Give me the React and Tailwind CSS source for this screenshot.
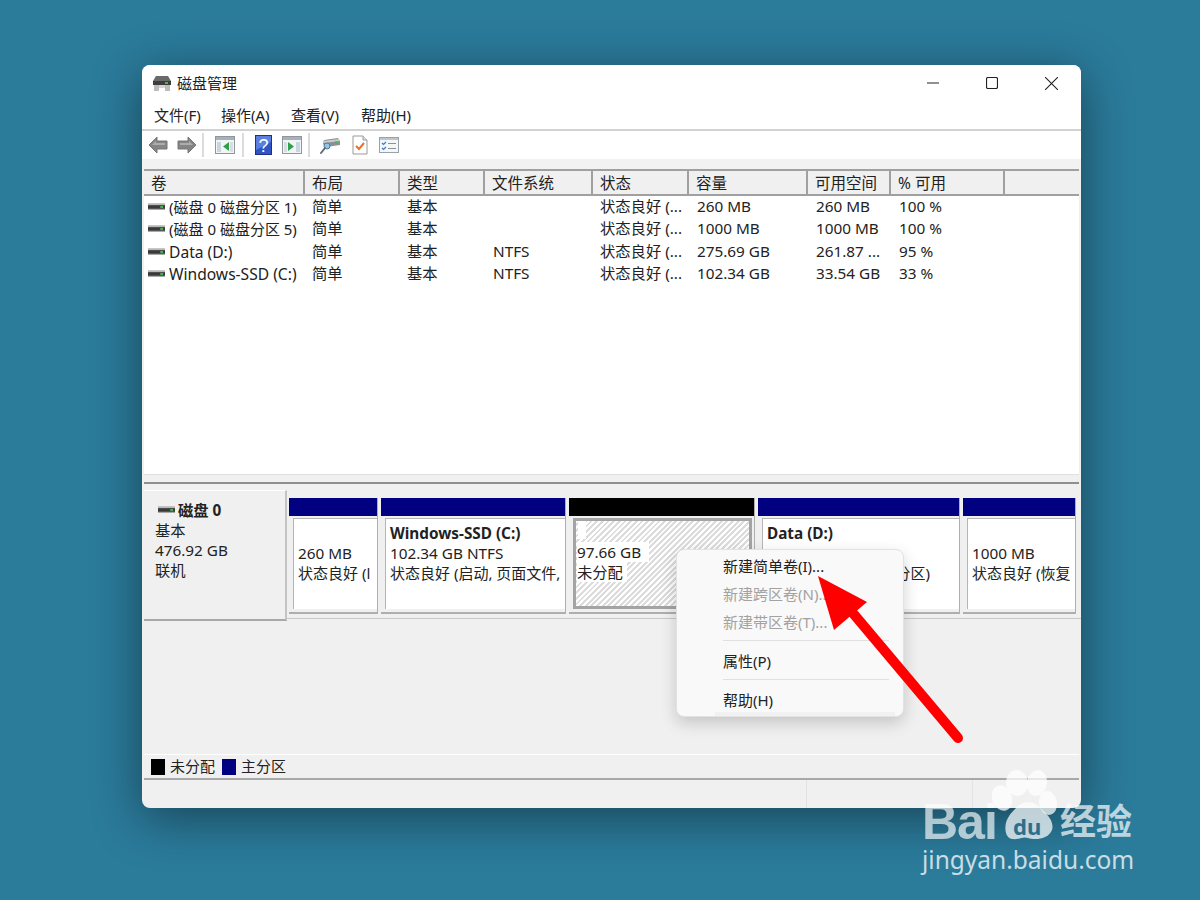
import React from "react";

const volumes = [
  { name: "(磁盘 0 磁盘分区 1)", nameSize: "text-[15px]", layout: "简单", type: "基本", fs: "", status: "状态良好 (...", size: "260 MB", free: "260 MB", pct: "100 %" },
  { name: "(磁盘 0 磁盘分区 5)", nameSize: "text-[15px]", layout: "简单", type: "基本", fs: "", status: "状态良好 (...", size: "1000 MB", free: "1000 MB", pct: "100 %" },
  { name: "Data (D:)", nameSize: "text-[15.6px]", layout: "简单", type: "基本", fs: "NTFS", status: "状态良好 (...", size: "275.69 GB", free: "261.87 ...", pct: "95 %" },
  { name: "Windows-SSD (C:)", nameSize: "text-[15.6px]", layout: "简单", type: "基本", fs: "NTFS", status: "状态良好 (...", size: "102.34 GB", free: "33.54 GB", pct: "33 %" },
];

const DriveIcon = ({ className }) => (
  <svg viewBox="0 0 18 8" className={className}>
    <rect x="0" y="0" width="18" height="2" fill="#b8b8b8" />
    <rect x="0" y="2" width="18" height="4" fill="#3a3a3a" />
    <rect x="13" y="3" width="3" height="2" fill="#3fc04a" />
    <rect x="0" y="6" width="18" height="1" fill="#9a9a9a" />
  </svg>
);

const Sep = () => <div className="w-[2px] h-[24px] bg-[#dcdcdc]" />;

const PaneIcon = ({ dir }) => (
  <svg viewBox="0 0 20 18" className="w-[20px] h-[18px]">
    <rect x="0.5" y="0.5" width="19" height="17" fill="#f2f4f6" stroke="#8f979e" />
    <rect x="1" y="1" width="18" height="3" fill="#a9b0b6" />
    {dir === "left" ? (
      <>
        <rect x="2" y="6" width="4" height="10" fill="#c6d6e2" />
        <path d="M14 6v9l-6-4.5z" fill="#2ca24a" />
        <rect x="15" y="6" width="3" height="10" fill="#d7dde2" />
      </>
    ) : (
      <>
        <rect x="14" y="6" width="4" height="10" fill="#c6d6e2" />
        <path d="M6 6v9l6-4.5z" fill="#2ca24a" />
        <rect x="2" y="6" width="3" height="10" fill="#d7dde2" />
      </>
    )}
  </svg>
);

const NavArrow = ({ flip }) => (
  <svg viewBox="0 0 20 18" className={flip ? "w-[20px] h-[18px] -scale-x-100" : "w-[20px] h-[18px]"}>
    <path d="M1 9 L9 1 V5 H19 V13 H9 V17 Z" fill="#858585" stroke="#777" strokeWidth="1" strokeLinejoin="round" />
    <path d="M4 9 L8 5 V7 H17 V9 Z" fill="#adadad" />
  </svg>
);

const Toolbar = () => (
  <div className="h-[28px] bg-white flex items-center pl-[6px] shrink-0">
    <NavArrow />
    <div className="w-[9px]" />
    <NavArrow flip />
    <div className="w-[5px]" />
    <Sep />
    <div className="w-[11px]" />
    <PaneIcon dir="left" />
    <div className="w-[7px]" />
    <Sep />
    <div className="w-[11px]" />
    <svg viewBox="0 0 17 20" className="w-[17px] h-[20px]">
      <rect x="0.5" y="0.5" width="16" height="19" fill="#2f55c4" stroke="#1d2f86" />
      <path d="M1 1h15v6L1 15z" fill="#5b7fe0" />
      <text x="8.5" y="16.5" textAnchor="middle" fontSize="18" fill="#fff" fontFamily="Liberation Sans">?</text>
    </svg>
    <div className="w-[10px]" />
    <PaneIcon dir="right" />
    <div className="w-[6px]" />
    <Sep />
    <div className="w-[10px]" />
    <svg viewBox="0 0 21 20" className="w-[21px] h-[20px]">
      <path d="M4 5 L18 3 L20 6 V10 L6 12 L3 9z" fill="#8a9096" />
      <path d="M3 6 L19 4 L20 6 L4 8z" fill="#c7ccd0" />
      <rect x="15" y="6.5" width="3" height="2" fill="#37c04a" />
      <circle cx="7" cy="11" r="3" fill="#8fc6ee" stroke="#5a7a94" />
      <path d="M5 13 L1 18" stroke="#5f6a74" strokeWidth="2" strokeLinecap="round" />
    </svg>
    <div className="w-[11px]" />
    <svg viewBox="0 0 16 20" className="w-[16px] h-[20px]">
      <path d="M1 1h10l4 4v14H1z" fill="#fff" stroke="#9a9a9a" />
      <path d="M11 1v4h4" fill="#e4e4e4" stroke="#9a9a9a" />
      <path d="M4 11l3 3 5-6" fill="none" stroke="#e8702a" strokeWidth="2" />
    </svg>
    <div className="w-[11px]" />
    <svg viewBox="0 0 20 16" className="w-[20px] h-[16px]">
      <rect x="0.5" y="0.5" width="19" height="15" fill="#f4f6f8" stroke="#9aa2a8" />
      <rect x="1" y="1" width="18" height="2" fill="#c0c6cb" />
      <path d="M3 6l1.5 1.5L7 5M3 11l1.5 1.5L7 10" fill="none" stroke="#2f7fd6" strokeWidth="1.2" />
      <path d="M9 6.5h8M9 11.5h8" stroke="#8a9298" strokeWidth="1.2" />
    </svg>
  </div>
);

const headW = ["w-[161px]", "w-[95px]", "w-[85px]", "w-[108px]", "w-[96px]", "w-[119px]", "w-[83px]", "w-[114px]"];
const headers = ["卷", "布局", "类型", "文件系统", "状态", "容量", "可用空间", "% 可用"];

const VolumeTable = () => (
  <div className="h-[305px] mx-[2px] bg-white shrink-0 flex flex-col overflow-hidden">
    <div className="h-[27px] flex bg-[#f0f0f0] border-t-2 border-b-2 border-[#a0a0a0] shrink-0">
      {headers.map((h, i) => (
        <div key={h} className={`${headW[i]} shrink-0 pl-[7px] border-r-2 border-[#a0a0a0] text-[15.5px] leading-[25px] text-[#222]`}>
          {h}
        </div>
      ))}
      <div className="flex-1" />
    </div>
    <div>
      {volumes.map((v) => (
        <div key={v.name} className="h-[22.3px] flex text-[15.3px] leading-[20px] text-[#222]">
          <div className={`w-[160px] shrink-0 pl-[4px] flex items-center gap-[4px] whitespace-nowrap overflow-hidden ${v.nameSize}`}>
            <DriveIcon className="w-[17px] h-[8px] shrink-0" />
            <span>{v.name}</span>
          </div>
          <div className="w-[95px] shrink-0 pl-[8px]">{v.layout}</div>
          <div className="w-[85px] shrink-0 pl-[8px]">{v.type}</div>
          <div className="w-[108px] shrink-0 pl-[9px]">{v.fs}</div>
          <div className="w-[96px] shrink-0 pl-[8px] whitespace-nowrap">{v.status}</div>
          <div className="w-[119px] shrink-0 pl-[9px]">{v.size}</div>
          <div className="w-[83px] shrink-0 pl-[9px] whitespace-nowrap">{v.free}</div>
          <div className="w-[114px] shrink-0 pl-[9px]">{v.pct}</div>
        </div>
      ))}
    </div>
  </div>
);

const Partition = ({ w, bar = "bg-[#000080]", hatch, lines }) => (
  <div className={`${w} shrink-0 flex flex-col border-r border-b-2 border-[#aeaeae]`}>
    <div className={`h-[18px] ${bar}`} />
    {hatch ? (
      <div className="h-[96px] pt-[2px] pl-[4px] pb-[3px] pr-[2px] bg-[#f0f0f0]">
        <div className="h-full border-[3px] border-[#a4a4a4] bg-[repeating-linear-gradient(135deg,#ffffff_0,#ffffff_2px,#dcdcdc_2px,#dcdcdc_4px)] pl-[1px] text-[15.3px] leading-[20px] text-[#222]">
          <div className="w-[8px] h-[18px] bg-white ml-[1px]" />
          <div className="h-[3px]" />
          <div className="bg-white w-fit pr-[8px]">97.66 GB</div>
          <div className="bg-white w-fit pr-[4px]">未分配</div>
        </div>
      </div>
    ) : (
      <div className="h-[96px] pt-[2px] pl-[4px] pb-[3px] bg-[#f0f0f0]">
        <div className="h-full bg-white border-t border-l border-[#b5b5b5] pl-[4px] pr-[2px] pt-[4px] text-[15.3px] leading-[20px] text-[#222]">
          <div className="whitespace-nowrap">
            {lines.map((l, i) =>
              l.bold ? (
                <div key={i} className="font-bold">{l.text}</div>
              ) : (
                <div key={i} className={l.empty ? "h-[20px]" : l.status ? "text-[15px]" : ""}>{l.text}</div>
              )
            )}
          </div>
        </div>
      </div>
    )}
  </div>
);

const DiskPanel = () => (
  <div className="h-[137px] flex shrink-0 ml-[2px]">
    <div className="w-[143px] h-[131px] mt-[6px] bg-[#f0f0f0] border-t border-white border-r-2 border-b-2 border-r-[#c4c4c4] border-b-[#a8a8a8] pl-[11px] pt-[9px] text-[15.3px] leading-[20px] text-[#222] shrink-0">
      <div className="flex items-center font-bold pl-[3px]">
        <DriveIcon className="w-[17px] h-[8px] mr-[3px]" />
        磁盘 0
      </div>
      <div>基本</div>
      <div>476.92 GB</div>
      <div>联机</div>
    </div>
    <div className="h-[135px] flex flex-1 gap-[3px] pl-[2px] pt-[14px] items-start border-b border-[#c8c8c8]">
      <Partition w="w-[89px]" lines={[{ empty: true }, { text: "260 MB" }, { text: "状态良好 (l", status: true }]} />
      <Partition w="w-[185px]" lines={[{ text: "Windows-SSD  (C:)", bold: true }, { text: "102.34 GB NTFS" }, { text: "状态良好 (启动, 页面文件,", status: true }]} />
      <Partition w="w-[186px]" bar="bg-black" hatch />
      <Partition w="w-[202px]" lines={[{ text: "Data  (D:)", bold: true }, { text: "275.69 GB NTFS" }, { text: "状态良好 (基本数据分区)", status: true }]} />
      <Partition w="w-[113px]" lines={[{ empty: true }, { text: "1000 MB" }, { text: "状态良好 (恢复", status: true }]} />
    </div>
  </div>
);

const ContextMenu = () => (
  <div className="absolute left-[534px] top-[484px] w-[228px] h-[168px] bg-[#f9f9f9] rounded-[8px] border border-[#e2e2e2] shadow-[0_6px_16px_rgba(0,0,0,0.18)] text-[15px] text-[#222] flex flex-col pt-[3px] pl-[46px] pr-[14px]">
    <div className="h-[28px] leading-[26px]">新建简单卷(I)...</div>
    <div className="h-[28px] leading-[26px] text-[#a2a2a2]">新建跨区卷(N)...</div>
    <div className="h-[28px] leading-[27px] text-[#a2a2a2]">新建带区卷(T)...</div>
    <div className="h-[1px] bg-[#e0e0e0] mt-[3px]" />
    <div className="h-[38px] leading-[40px]">属性(P)</div>
    <div className="h-[1px] bg-[#e0e0e0]" />
    <div className="h-[32px] leading-[40px]">帮助(H)</div>
    <div className="h-[4px] -ml-[8px] -mr-[6px] bg-[#f1f1f1]" />
  </div>
);

const Watermark = () => (
  <div className="absolute left-[920px] top-[770px] w-[230px] h-[110px] text-white">
    <svg viewBox="0 0 230 110" className="absolute left-0 top-0 w-[230px] h-[110px]">
      <g fill="#fff" fillOpacity="0.72">
        <ellipse cx="97" cy="13" rx="11" ry="13" transform="rotate(-5 97 13)" />
        <ellipse cx="117" cy="13" rx="10" ry="13" transform="rotate(10 117 13)" />
        <ellipse cx="82" cy="28" rx="10" ry="13" transform="rotate(-20 82 28)" />
        <ellipse cx="128" cy="33" rx="9" ry="12" transform="rotate(-10 128 33)" />
        <path d="M96 38 C102 30 116 30 122 40 C130 46 134 54 132 60 C128 70 114 70 108 68 C102 66 100 70 92 69 C84 68 84 54 88 48 C90 44 92 42 96 38 Z" />
      </g>
    </svg>
    <div className="absolute left-[2px] top-[27px] text-[50px] leading-[50px] font-bold font-['Liberation_Sans',sans-serif] tracking-[-1px] text-white/65">
      Bai
    </div>
    <div className="absolute left-[93px] top-[43px] text-[22px] leading-[26px] font-bold text-[#2b6f8d]">du</div>
    <div className="absolute left-[140px] top-[28px] text-[36px] leading-[48px] font-bold text-white/70">经验</div>
    <div className="absolute left-[2px] top-[74px] text-[24.5px] leading-[32px] text-white/75 whitespace-nowrap">jingyan.baidu.com</div>
  </div>
);

export default function App() {
  return (
    <div className="relative w-[1200px] h-[900px] overflow-hidden bg-[#2b7b9b] font-['Noto_Sans','Noto_Sans_CJK_SC',sans-serif]">
      {/* window */}
      <div className="absolute left-[142px] top-[65px] w-[939px] h-[743px] bg-[#f0f0f0] rounded-[8px] overflow-hidden shadow-[0_10px_50px_rgba(0,0,0,0.45)] flex flex-col">
        <div className="h-[36px] bg-white flex items-center pl-[10px] shrink-0">
          <svg viewBox="0 0 20 18" className="w-[20px] h-[18px]">
            <path d="M4 2h12l3 5H1z" fill="#6a6a6a" />
            <rect x="1" y="7" width="18" height="4" fill="#3d3d3d" />
            <rect x="13" y="8" width="3" height="2" fill="#39c24c" />
            <rect x="2" y="11" width="5" height="6" fill="#bdbdbd" />
            <rect x="13" y="11" width="5" height="6" fill="#bdbdbd" />
            <rect x="7" y="11" width="6" height="3" fill="#d4d4d4" />
          </svg>
          <span className="ml-[5px] text-[15px] text-[#222]">磁盘管理</span>
          <div className="flex-1" />
          <svg viewBox="0 0 12 12" className="w-[12px] h-[12px] mr-[47px]"><path d="M0 6h12" stroke="#222" strokeWidth="1" /></svg>
          <svg viewBox="0 0 12 12" className="w-[12px] h-[12px] mr-[47px]"><rect x="0.5" y="0.5" width="11" height="11" rx="1.5" fill="none" stroke="#222" strokeWidth="1.2" /></svg>
          <svg viewBox="0 0 12 12" className="w-[13px] h-[13px] mr-[23px]"><path d="M0 0l12 12M12 0L0 12" stroke="#222" strokeWidth="1" /></svg>
        </div>
        <div className="h-[30px] bg-white flex items-center pl-[12px] pt-[1px] text-[15px] text-[#222] border-b-2 border-[#d2d2d2] shrink-0">
          <span className="w-[67px]">文件(F)</span>
          <span className="w-[70px]">操作(A)</span>
          <span className="w-[70px]">查看(V)</span>
          <span>帮助(H)</span>
        </div>
        <Toolbar />
        <div className="h-[10px] bg-[#f2f2f2] shrink-0" />
        <VolumeTable />
        <div className="h-[10px] mx-[2px] bg-[#f0f0f0] border-b-2 border-t border-t-[#e0e0e0] border-b-[#8f8f8f] shrink-0" />
        <DiskPanel />
        <div className="flex-1" />
        <div className="h-[26px] mx-[2px] bg-[#f0f0f0] border-t border-white border-b-2 border-b-[#a8a8a8] flex items-center pl-[7px] text-[15px] text-[#222] shrink-0">
          <div className="w-[14px] h-[16px] bg-black" />
          <span className="ml-[5px]">未分配</span>
          <div className="ml-[7px] w-[14px] h-[16px] bg-[#000080]" />
          <span className="ml-[5px]">主分区</span>
        </div>
        <div className="h-[28px] flex justify-end shrink-0">
          <div className="w-[275px] border-l border-[#e2e2e2] flex justify-end">
            <div className="w-[109px] border-l border-[#e2e2e2]" />
          </div>
        </div>
        <ContextMenu />
      </div>

      {/* red arrow */}
      <svg viewBox="0 0 1200 900" className="absolute left-0 top-0 w-[1200px] h-[900px]">
        <path d="M852 612 L958 738" stroke="#ff0000" strokeWidth="10" strokeLinecap="round" />
        <path d="M818 576 L867 602 L834 630 Z" fill="#ff0000" />
      </svg>

      <Watermark />
    </div>
  );
}
